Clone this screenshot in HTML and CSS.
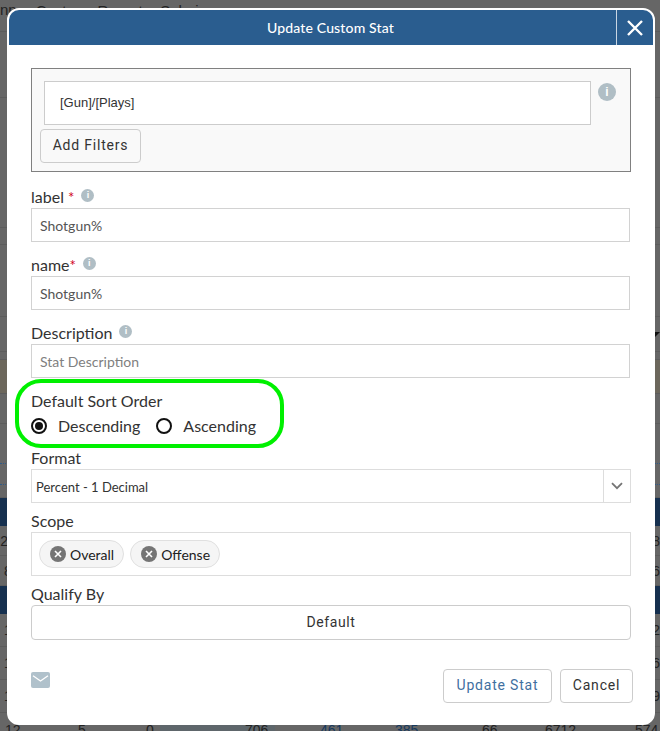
FILE: index.html
```html
<!DOCTYPE html>
<html lang="en">

<head>
  <meta charset="UTF-8">
  <meta name="viewport" content="width=device-width, initial-scale=1.0">
  <title>Update Custom Stat</title>
  <link rel="stylesheet" href="styles.css">
</head>

<body>
  <!-- dimmed page behind the dialog -->
  <div class="backdrop">
    <div class="bg-row bg-top"><span>nn</span><span class="bg-menu">Custom Reports Salaries</span></div>
    <div class="bg-row h-66"></div>
    <div class="bg-row h-130"></div>
    <div class="bg-row h-17"></div>
    <div class="bg-row h-72"></div>
    <div class="bg-row h-35 bg-caret-row"><span class="bg-caret"></span></div>
    <div class="bg-row h-8"></div>
    <div class="bg-row bg-tan"></div>
    <div class="bg-row h-30"></div>
    <div class="bg-row h-40 bg-dotted"></div>
    <div class="bg-row h-21 bg-dotted"></div>
    <div class="bg-row h-13"></div>
    <div class="bg-row bg-dark"></div>
    <div class="bg-row h-30 bg-split"><span>27</span><span>48</span></div>
    <div class="bg-row h-30 bg-split"><span>8</span><span>6</span></div>
    <div class="bg-row bg-dark"></div>
    <div class="bg-row h-33 bg-split"><span>1</span><span>2</span></div>
    <div class="bg-row h-33 bg-split"><span>1</span><span>6</span></div>
    <div class="bg-row h-33 bg-split"><span>1</span><span>9</span></div>
    <div class="bg-last">
      <span>12</span><span>5</span><span>0</span><span>706</span><span class="bg-link">461</span><span class="bg-link">385</span><span>66</span><span>6712</span><span>574</span>
    </div>
  </div>

  <div class="modal">
    <div class="modal-header">
      <div class="modal-title">Update Custom Stat</div>
      <button class="modal-close" aria-label="Close">
        <svg width="16" height="16" viewBox="0 0 16 16">
          <path d="M1 1 L15 15 M15 1 L1 15" stroke="#fff" stroke-width="2.4" fill="none" />
        </svg>
      </button>
    </div>

    <div class="modal-body">
      <div class="formula-panel">
        <div class="formula-row">
          <div class="formula-box">[Gun]/[Plays]</div>
          <span class="info info-large">i</span>
        </div>
        <button class="btn btn-filters">Add Filters</button>
      </div>

      <div class="field">
        <div class="field-label">label <span class="req">*</span><span class="info">i</span></div>
        <input class="text-input" type="text" value="Shotgun%" readonly>
      </div>

      <div class="field">
        <div class="field-label">name<span class="req">*</span><span class="info">i</span></div>
        <input class="text-input" type="text" value="Shotgun%" readonly>
      </div>

      <div class="field">
        <div class="field-label">Description<span class="info">i</span></div>
        <input class="text-input" type="text" placeholder="Stat Description" readonly>
      </div>

      <div class="sort-group">
        <div class="highlight"></div>
        <div class="field-label">Default Sort Order</div>
        <div class="radio-row">
          <span class="radio checked"></span><span class="radio-text">Descending</span>
          <span class="radio"></span><span class="radio-text">Ascending</span>
        </div>
      </div>

      <div class="field field-tight">
        <div class="field-label">Format</div>
        <div class="select-box">
          <div class="select-value">Percent - 1 Decimal</div>
          <div class="select-arrow">
            <svg width="12" height="8" viewBox="0 0 12 8">
              <path d="M1 1.2 L6 6.2 L11 1.2" stroke="#757575" stroke-width="1.8" fill="none" />
            </svg>
          </div>
        </div>
      </div>

      <div class="field field-tight">
        <div class="field-label">Scope</div>
        <div class="chip-box">
          <span class="chip">
            <span class="chip-x"><svg width="8" height="8" viewBox="0 0 8 8"><path d="M1 1 L7 7 M7 1 L1 7" stroke="#fff" stroke-width="1.6" /></svg></span>Overall
          </span>
          <span class="chip">
            <span class="chip-x"><svg width="8" height="8" viewBox="0 0 8 8"><path d="M1 1 L7 7 M7 1 L1 7" stroke="#fff" stroke-width="1.6" /></svg></span>Offense
          </span>
        </div>
      </div>

      <div class="field-label">Qualify By</div>
      <button class="btn btn-qualify">Default</button>

      <div class="modal-footer">
        <svg class="mail-icon" width="19" height="16" viewBox="0 0 19 16">
          <rect width="19" height="16" rx="2" fill="#b0c1cb" />
          <path d="M2 3.7 L9.5 9 L17 3.7" stroke="#fff" stroke-width="1.3" fill="none" />
        </svg>
        <div class="footer-buttons">
          <button class="btn btn-update">Update Stat</button>
          <button class="btn btn-cancel">Cancel</button>
        </div>
      </div>
    </div>
  </div>
</body>

</html>
```

FILE: styles.css
```css
* {
  margin: 0;
  padding: 0;
  box-sizing: border-box;
}

html,
body {
  height: 100%;
  overflow: hidden;
  background: #666;
  font-family: Lato, sans-serif;
}

/* Page behind the dialog */
.backdrop {
  color: #222;
  font-family: "Liberation Sans", sans-serif;
  font-size: 14px;
}

.bg-row {
  border-bottom: 1px solid #5c5c5c;
}

.bg-top {
  display: flex;
  height: 32px;
  font-size: 15px;
  line-height: 20px;
}

.bg-menu {
  margin-left: 19px;
  margin-top: 1px;
  word-spacing: 6px;
}

.h-8 { height: 8px; }
.h-13 { height: 13px; }
.h-17 { height: 17px; }
.h-21 { height: 21px; }
.h-30 { height: 30px; }
.h-33 { height: 33px; }
.h-35 { height: 35px; }
.h-40 { height: 40px; }
.h-66 { height: 66px; }
.h-72 { height: 72px; }
.h-130 { height: 130px; }

.bg-caret-row {
  display: flex;
  justify-content: flex-end;
  padding-top: 15px;
}

.bg-caret {
  width: 0;
  height: 0;
  border-style: solid;
  border-width: 5px 5px 0;
  border-color: #111 transparent transparent;
}

.bg-tan {
  height: 34px;
  background: #6c675c;
}

.bg-dotted {
  border-bottom: 1px dotted #2f5a87;
}

.bg-dark {
  height: 28px;
  background: #16304f;
  border: none;
}

.bg-split {
  display: flex;
  justify-content: space-between;
  align-items: center;
}

.bg-split span:first-child {
  width: 16px;
  text-align: center;
}

.bg-last {
  display: grid;
  grid-template-columns: 73px 68px 99px 75px 75px 87px 63px 90px 1fr;
  align-items: center;
  height: 33px;
  padding-left: 5px;
  background: linear-gradient(to right, transparent 160px, #5e666b 160px, #5e666b 275px, transparent 275px);
}

.bg-link {
  color: #16395e;
}

/* Dialog */
.modal {
  position: absolute;
  top: 8px;
  left: 7px;
  width: 648px;
  background: #fff;
  border: 2px solid #fff;
  border-radius: 12px;
  color: #333;
}

.modal-header {
  display: flex;
  height: 35px;
  background: #2a5d8f;
  border-radius: 10px 10px 0 0;
}

.modal-title {
  flex: 1;
  color: #fff;
  font-size: 14px;
  font-weight: 500;
  letter-spacing: 0.15px;
  line-height: 36px;
  text-align: center;
  padding-left: 36px;
}

.modal-close {
  display: flex;
  align-items: center;
  justify-content: center;
  width: 37px;
  background: none;
  border: none;
  border-left: 1px solid #c9d6e3;
}

.modal-body {
  padding: 23px 22px 20px;
}

/* Formula panel */
.formula-panel {
  background: #f9f9f9;
  border: 1px solid #808080;
  padding: 12px 14px 8px 12px;
  margin-bottom: 12px;
}

.formula-row {
  display: flex;
  align-items: flex-start;
  gap: 7px;
}

.formula-box {
  flex: 1;
  height: 44px;
  padding-left: 15px;
  background: #fff;
  border: 1px solid #ccc;
  color: #333;
  font-family: "Liberation Sans", sans-serif;
  font-size: 13px;
  line-height: 42px;
}

.info {
  display: inline-block;
  width: 13px;
  height: 13px;
  margin-left: 7px;
  vertical-align: 5px;
  border-radius: 50%;
  background: #b0bec5;
  color: #fff;
  font-family: "Liberation Sans", sans-serif;
  font-size: 9px;
  font-weight: 700;
  line-height: 13px;
  text-align: center;
}

.info-large {
  flex: none;
  width: 18px;
  height: 18px;
  margin: 2px 0 0;
  font-size: 12px;
  line-height: 18px;
}

/* Buttons */
.btn {
  padding-bottom: 2px;
  background: #fff;
  border: 1px solid #ccc;
  border-radius: 4px;
  color: #333;
  font-family: Roboto, sans-serif;
  font-size: 14px;
  letter-spacing: 0.8px;
  cursor: pointer;
}

.btn-filters {
  display: block;
  width: 101px;
  height: 34px;
  margin: 4px 0 0 -4px;
  background: #f9f9f9;
}

.btn-qualify {
  display: block;
  width: 100%;
  height: 35px;
  letter-spacing: 0.6px;
}

.btn-update {
  width: 109px;
  height: 34px;
  color: #3f6f9f;
}

.btn-cancel {
  width: 73px;
  height: 34px;
}

/* Form fields */
.field {
  margin-bottom: 10px;
}

.field-tight {
  margin-bottom: 5px;
}

.field-label {
  height: 24px;
  font-size: 16px;
  line-height: 26px;
}

.req {
  color: #d0021b;
  font-size: 15px;
}

.text-input {
  display: block;
  width: 599px;
  height: 34px;
  padding-left: 8px;
  background: #fff;
  border: 1px solid #d2d2d2;
  color: #555;
  font-family: Lato, sans-serif;
  font-size: 14px;
  outline: none;
}

.text-input::placeholder {
  color: #808080;
}

/* Sort order */
.sort-group {
  position: relative;
  margin-bottom: 7px;
}

.highlight {
  position: absolute;
  top: -9px;
  left: -16px;
  width: 269px;
  height: 69px;
  border: 4px solid #00f000;
  border-radius: 26px;
}

.radio-row {
  display: flex;
  align-items: center;
  height: 24px;
  margin-top: 2px;
}

.radio {
  position: relative;
  flex: none;
  width: 16px;
  height: 16px;
  border: 2px solid #111;
  border-radius: 50%;
}

.radio.checked::after {
  content: "";
  position: absolute;
  top: 2px;
  left: 2px;
  width: 8px;
  height: 8px;
  border-radius: 50%;
  background: #111;
}

.radio-text {
  margin: 0 16px 2px 11px;
  font-size: 16px;
}

/* Format select */
.select-box {
  display: flex;
  height: 34px;
  border: 1px solid #ddd;
}

.select-value {
  flex: 1;
  padding-left: 4px;
  color: #333;
  font-size: 13px;
  line-height: 34px;
}

.select-arrow {
  display: flex;
  align-items: center;
  justify-content: center;
  width: 27px;
  border-left: 1px solid #ddd;
}

/* Scope chips */
.chip-box {
  display: flex;
  align-items: center;
  gap: 6px;
  height: 44px;
  padding-left: 7px;
  border: 1px solid #ddd;
}

.chip {
  display: flex;
  align-items: center;
  gap: 4px;
  height: 28px;
  padding: 0 9px 0 10px;
  background: #f5f5f5;
  border: 1px solid #e0e0e0;
  border-radius: 14px;
  color: #212121;
  font-size: 14px;
}

.chip-x {
  display: flex;
  align-items: center;
  justify-content: center;
  width: 16px;
  height: 16px;
  border-radius: 50%;
  background: #757575;
}

/* Footer */
.modal-footer {
  display: flex;
  justify-content: space-between;
  align-items: flex-start;
  margin-top: 29px;
  margin-right: -2px;
}

.mail-icon {
  margin-top: 3px;
}

.footer-buttons {
  display: flex;
  gap: 8px;
}
```
